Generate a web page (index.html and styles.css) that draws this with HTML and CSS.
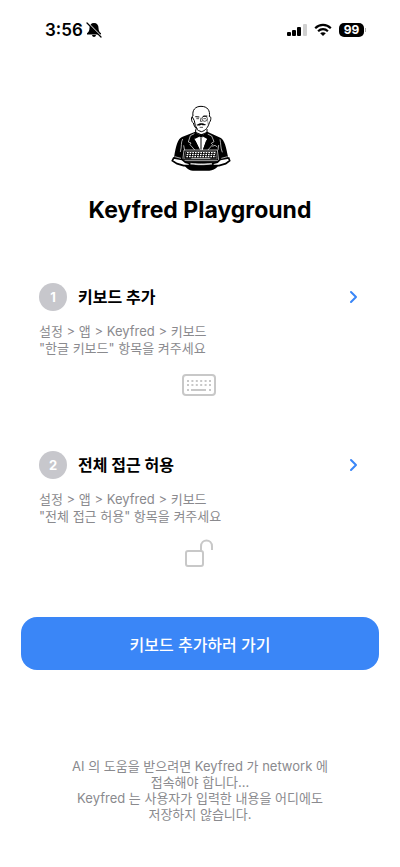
FILE: index.html
```html
<!DOCTYPE html>
<html lang="ko">
<head>
    <meta charset="UTF-8">
    <meta name="viewport" content="width=device-width, initial-scale=1.0">
    <title>Keyfred Playground</title>
    <link rel="stylesheet" href="styles.css">
</head>
<body>
    <!-- Status Bar -->
    <header class="status-bar">
        <div class="status-left">
            <span>3:56</span>
            <svg width="16" height="16" viewBox="0 0 16 16">
                <path d="M8 1C5 1 3.5 3 3.5 6C3.5 9 2.2 10.3 1 11.3V12.500H15V11.3C13.8 10.3 12.5 9 12.5 6C12.5 3 11 1 8 1ZM6 13H10C9.8 14.3 9 15 8 15S6.2 14.3 6 13Z"/>
                <path d="M2 1L16 15" stroke="#fff" stroke-width="1.2"/>
                <path d="M1 1L15 15" stroke="#000" stroke-width="1.3" stroke-linecap="round"/>
            </svg>
        </div>
        <div class="status-right">
            <svg width="20" height="14" viewBox="0 0 20 14">
                <rect x="0" y="9" width="4" height="4" rx="1"/>
                <rect x="5" y="7" width="4" height="6" rx="1"/>
                <rect x="10" y="4" width="4" height="9" rx="1"/>
                <rect x="16" y="1" width="4" height="12" rx="1" fill="#d0d0d0"/>
            </svg>
            <svg width="18" height="14" viewBox="0 0 18 14" fill="none" stroke="#000" stroke-width="2.2">
                <path d="M1.2 5.2C5.6.8 12.4.8 16.8 5.2M4.1 8.2C6.9 5.5 11.1 5.5 13.9 8.2"/>
                <path d="M6.2 10.3C7.8 8.9 10.2 8.9 11.8 10.3L9 13Z" fill="#000" stroke="none"/>
            </svg>
            <span class="battery">99</span>
        </div>
    </header>

    <main class="content">
        <!-- Butler holding a keyboard -->
        <svg class="logo" viewBox="0 0 240 270" role="img" aria-label="Keyfred">
            <!-- Jacket -->
            <path d="M106 110L66 126C53 132 48 151 42 188L62 202H184L205 190C198 155 194 135 181 128L142 110L124 118Z"/>
            <path d="M66 192C72 215 82 226 99 227H148C168 225 178 213 183 193Z"/>
            <!-- Shirt -->
            <path d="M107 113L104 133L120 168H127L141 133L139 113L124 122Z" fill="#fff"/>
            <path d="M104 111L124 122L104 132ZM141 111L124 122L142 132Z"/>
            <path d="M119 118H128V127H119Z"/>
            <path d="M123 128V165M105 137L119 165M140 136L130 165" stroke="#000" stroke-width="3"/>
            <!-- Lapels -->
            <g fill="none" stroke="#fff" stroke-width="2">
                <path d="M103 116L91 122L85 141L93 144L90 149L107 168M143 117L155 123L162 140L154 145L158 149L141 168"/>
                <path d="M68 132C62 143 66 153 61 171M180 133C183 146 181 158 187 172M71 151L74 167M176 150L174 165"/>
                <path d="M157 154L165 151L172 156"/>
            </g>
            <!-- Head -->
            <path d="M99 63C96 45 106 34 123 34C143 34 151 47 148 65C154 62 154 76 148 83C145 96 136 108 124 110C111 107 103 97 100 84C93 80 93 64 99 63Z" fill="#fff" stroke="#000" stroke-width="3"/>
            <path d="M97 66L103 77L106 92L112 102M107 103V118M141 102V117" fill="none" stroke="#000" stroke-width="3"/>
            <path d="M106 65L118 66M129 64L142 63" stroke="#000" stroke-width="3"/>
            <path d="M109 71H117M130 71H138M123 68L121 79H127M119 97H129" fill="none" stroke="#000" stroke-width="2"/>
            <circle cx="134" cy="71" r="8" fill="none" stroke="#000" stroke-width="2"/>
            <path d="M142 72L145 91" stroke="#000" stroke-width="1"/>
            <path d="M109 90C114 88 118 83 124 85C130 83 135 88 139 89C133 92 129 91 124 89C119 92 113 93 109 90Z"/>
            <!-- Keyboard -->
            <path d="M72 165H172L176 197H68Z" stroke="#fff" stroke-width="2"/>
            <path d="M77 170H167L171 192H73Z" fill="none" stroke="#fff" stroke-width="1"/>
            <path d="M81 173H166M80 179H167M79 185H168" stroke="#fff" stroke-width="4" stroke-dasharray="5 3"/>
            <path d="M94 190H151" stroke="#fff" stroke-width="2"/>
            <!-- Tray and gloves -->
            <path d="M64 198C88 207 160 207 184 198L178 205C154 213 92 213 70 205Z" fill="#fff" stroke="#000" stroke-width="2"/>
            <path d="M41 189L66 193L76 202L89 205L88 212H71L51 206L37 197ZM206 189L181 193L172 202L158 205L160 212H177L197 206L209 197Z" fill="#fff" stroke="#000" stroke-width="5"/>
            <path d="M44 185L63 190M203 185L184 190" stroke="#fff" stroke-width="2"/>
        </svg>
        <h1>Keyfred Playground</h1>

        <!-- Setup Steps -->
        <section class="steps">
            <article class="step">
                <a class="step-header" href="#keyboard">
                    <span class="step-number">1</span>
                    <h2>키보드 추가</h2>
                    <svg class="chevron" viewBox="0 0 10 14">
                        <path d="M2 2L7 7L2 12"/>
                    </svg>
                </a>
                <p>설정 &gt; 앱 &gt; Keyfred &gt; 키보드<br>"한글 키보드" 항목을 켜주세요</p>
                <svg class="step-icon" viewBox="0 0 34 32">
                    <rect x="1" y="6" width="32" height="20" rx="3"/>
                    <path d="M5 12H29M5 16H29" stroke-dasharray="2 2.4"/>
                    <path d="M5 21H7M9 21H24M27 21H29"/>
                </svg>
            </article>

            <article class="step">
                <a class="step-header" href="#access">
                    <span class="step-number">2</span>
                    <h2>전체 접근 허용</h2>
                    <svg class="chevron" viewBox="0 0 10 14">
                        <path d="M2 2L7 7L2 12"/>
                    </svg>
                </a>
                <p>설정 &gt; 앱 &gt; Keyfred &gt; 키보드<br>"전체 접근 허용" 항목을 켜주세요</p>
                <svg class="step-icon" viewBox="0 0 34 32">
                    <rect x="4" y="14" width="17" height="15" rx="2"/>
                    <path d="M19 14V9.500C19 1.500 30 1.500 30 9.500V13"/>
                </svg>
            </article>
        </section>

        <button class="add-button" type="button">키보드 추가하러 가기</button>
    </main>

    <footer class="notice">
        <p>AI 의 도움을 받으려면 Keyfred 가 network 에<br>접속해야 합니다...<br>Keyfred 는 사용자가 입력한 내용을 어디에도<br>저장하지 않습니다.</p>
    </footer>
</body>
</html>
```
FILE: styles.css
```css
* {
    margin: 0;
    padding: 0;
    box-sizing: border-box;
}

body {
    min-height: 100vh;
    display: flex;
    flex-direction: column;
    background: #fff;
    color: #000;
    font-family: Inter, "Noto Sans CJK KR", sans-serif;
}

/* Status Bar */
.status-bar {
    display: flex;
    justify-content: space-between;
    align-items: center;
    height: 60px;
    padding: 0 36px 0 45px;
}

.status-left,
.status-right {
    display: flex;
    align-items: center;
}

.status-left {
    gap: 3px;
    font-size: 17px;
    font-weight: 600;
}

.status-right {
    gap: 7px;
}

.battery {
    position: relative;
    width: 25px;
    border-radius: 5px;
    background: #000;
    color: #fff;
    font-size: 12px;
    font-weight: 700;
    line-height: 14px;
    text-align: center;
}

.battery::after {
    content: "";
    position: absolute;
    top: 5px;
    right: -2px;
    width: 1px;
    height: 4px;
    background: #aaa;
}

/* Main Content */
.content {
    display: flex;
    flex-direction: column;
    align-items: center;
    padding: 35px 21px 0;
}

.logo {
    width: 80px;
    height: 90px;
}

h1 {
    margin-top: 10px;
    font-size: 23px;
    font-weight: 700;
    line-height: 30px;
}

/* Setup Steps */
.steps {
    display: flex;
    flex-direction: column;
    gap: 50px;
    width: 100%;
    margin-top: 58px;
    padding: 0 20px 0 18px;
}

.step {
    display: flex;
    flex-direction: column;
    gap: 12px;
}

.step-header {
    display: flex;
    align-items: center;
    gap: 11px;
    height: 28px;
    color: #000;
    text-decoration: none;
}

.step-number {
    width: 28px;
    border-radius: 50%;
    background: #c7c7cc;
    color: #fff;
    font-size: 13px;
    font-weight: 700;
    line-height: 28px;
    text-align: center;
}

h2 {
    flex: 1;
    font-size: 16px;
    font-weight: 700;
    line-height: 28px;
}

.chevron {
    width: 10px;
    height: 14px;
    fill: none;
    stroke: #3a86f7;
    stroke-width: 2;
    stroke-linecap: round;
    stroke-linejoin: round;
}

.step p {
    color: #8a8a8e;
    font-size: 13px;
    line-height: 17px;
}

.step-icon {
    align-self: center;
    width: 34px;
    height: 32px;
    fill: none;
    stroke: #c8c8c8;
    stroke-width: 2;
}

.add-button {
    width: 100%;
    height: 53px;
    margin-top: 48px;
    border: none;
    border-radius: 16px;
    background: #3a86f7;
    color: #fff;
    font-family: inherit;
    font-size: 16px;
    font-weight: 500;
}

/* Footer Notice */
.notice {
    margin-top: auto;
    padding: 45px 21px;
    color: #8a8a8e;
    font-size: 13px;
    line-height: 16px;
    text-align: center;
}
```
